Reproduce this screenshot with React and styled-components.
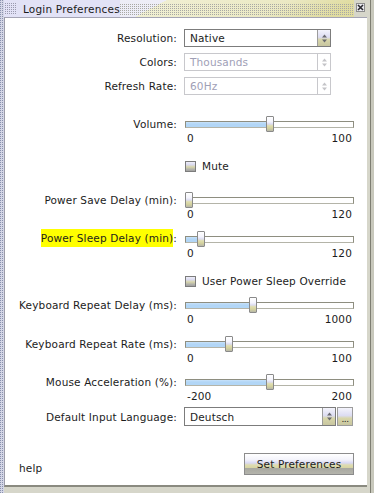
import React from "react";
import styled, { createGlobalStyle, css } from "styled-components";

const GlobalStyle = createGlobalStyle`
  html, body {
    margin: 0;
    padding: 0;
  }
  body {
    font-family: "DejaVu Sans", Verdana, sans-serif;
    font-size: 10.5px;
    letter-spacing: 0.15px;
    color: #1c1c1c;
  }
`;

const dots = (color) => `conic-gradient(at 1px 1px, transparent 75%, ${color} 75%)`;

const Desktop = styled.div`
  width: 374px;
  height: 493px;
  box-sizing: border-box;
  padding-left: 4px;
  display: flex;
  background: ${dots("#8a92ae")} 0 0 / 2px 2px, #d4d6e6;
`;

const Window = styled.div`
  flex: 1;
  display: flex;
  flex-direction: column;
  padding: 0 7px 6px 0;
  background: linear-gradient(
    to right,
    #d6d6ca calc(100% - 4px),
    #7e7e72 calc(100% - 4px),
    #7e7e72 calc(100% - 3px),
    #c8c8bc calc(100% - 3px)
  );
`;

const TitleBar = styled.div`
  height: 17px;
  display: flex;
  flex-shrink: 0;
`;

const Tab = styled.div`
  width: 116px;
  display: flex;
  align-items: center;
  background: #e2e2f6;
  padding-left: 1px;
  box-sizing: border-box;
`;

const Grip = styled.span`
  width: 12px;
  height: 11px;
  background: ${dots("#9a9aae")} 0 0 / 2px 2px;
`;

const TitleText = styled.span`
  margin-left: 6px;
  letter-spacing: 0.2px;
  white-space: nowrap;
`;

const TitleFill = styled.div`
  flex: 1;
  padding: 3px 0 2px;
  background: ${dots("#a8a8a4")} 0 0 / 2px 2px,
    linear-gradient(152deg, #ededf7 0, #ededf7 22px, #f0efd2 22px, #ebe9c4 80px, #e0dca0 112px);
  background-clip: content-box, border-box;
`;

const CloseBox = styled.div`
  width: 9px;
  height: 9px;
  margin: 3px 2px 0 2px;
  box-sizing: border-box;
  border: 1px solid #8c8c8c;
  background: #e8e8ee;
  display: flex;
  align-items: center;
  justify-content: center;
`;

const Body = styled.div`
  flex: 1;
  display: flex;
  flex-direction: column;
  background: #ffffff;
  border-top: 1px solid #a4a4b4;
  border-left: 1px solid #9c9ca8;
  border-bottom: 2px solid #8a8a80;
`;

const Row = styled.div`
  display: flex;
  align-items: center;
  height: ${(p) => p.$h || 16}px;
  margin-top: ${(p) => p.$mt || 0}px;
`;

const Label = styled.div`
  width: 172px;
  margin-right: 7px;
  flex-shrink: 0;
  text-align: right;
  white-space: nowrap;
`;

const Highlight = styled.span`
  display: inline-block;
  line-height: 18px;
  margin-top: -3px;
  background: #ffff00;
`;

const SelectBox = styled.div`
  display: flex;
  height: 100%;
  width: ${(p) => p.$w}px;
  box-sizing: border-box;
  border: 1px solid ${(p) => (p.$disabled ? "#c8c8cc" : "#7c7c7c")};
  background: #fff;
`;

const SelectValue = styled.div`
  flex: 1;
  display: flex;
  align-items: center;
  padding-left: 5px;
  color: ${(p) => (p.$disabled ? "#a0a0b6" : "#1c1c1c")};
`;

const Spinner = styled.div`
  width: 12px;
  display: flex;
  align-items: center;
  justify-content: center;
  border-left: 1px solid ${(p) => (p.$disabled ? "#c8c8cc" : "#9c9c9c")};
  ${(p) =>
    p.$disabled
      ? css`
          background: #ffffff;
        `
      : css`
          background: linear-gradient(to bottom, #f4f4fc 0%, #dcdcf2 45%, #d8d6aa 60%, #c8c6a0 100%);
        `}
`;

const MoreButton = styled.div`
  width: 16px;
  height: 100%;
  margin-left: 1px;
  box-sizing: border-box;
  border: 1px solid #9c9c9c;
  background: linear-gradient(to bottom, #f4f4fc 0%, #dcdcf2 45%, #d8d6aa 60%, #c8c6a0 100%);
  display: flex;
  align-items: flex-end;
  justify-content: center;
  font-size: 9px;
  line-height: 12px;
  letter-spacing: -0.5px;
`;

const SliderWrap = styled.div`
  position: relative;
  width: 169px;
  height: 16px;
  margin-left: 1px;
  display: flex;
  align-items: center;
`;

const Rail = styled.div`
  flex: 1;
  height: 7px;
  box-sizing: border-box;
  border: 1px solid #8e8e80;
  border-bottom-color: #b4b4a8;
  background: #ffffff;
  display: flex;
  overflow: hidden;
`;

const Fill = styled.div`
  height: 100%;
  background: linear-gradient(to bottom, #c8e2fa 0%, #b2d6f6 40%, #b2d6f6 100%);
`;

const Thumb = styled.div`
  position: absolute;
  top: 0;
  width: 8px;
  height: 16px;
  box-sizing: border-box;
  border: 1px solid #8a8a8a;
  border-radius: 1px;
  background: linear-gradient(to bottom, #ffffff 0%, #f4f4fc 35%, #dcdcf2 50%, #e0deb0 62%, #d4d29e 80%, #b8b8a8 100%);
`;

const Ticks = styled.div`
  width: 170px;
  box-sizing: border-box;
  padding: 0 2px 0 3px;
  display: flex;
  justify-content: space-between;
`;

const CheckBox = styled.span`
  width: 11px;
  height: 11px;
  margin-left: 1px;
  box-sizing: border-box;
  border: 1px solid #7c7c7c;
  background: linear-gradient(to bottom, #eeeef8 0%, #dadaf0 30%, #d8d6aa 55%, #b4b4ac 80%, #a0a0a0 100%);
`;

const CheckText = styled.span`
  margin-left: 6px;
  white-space: nowrap;
`;

const Footer = styled.div`
  display: flex;
  justify-content: space-between;
  align-items: flex-end;
  margin-top: 27px;
  padding: 0 13px 0 14px;
`;

const HelpLink = styled.span`
  padding-bottom: 1px;
`;

const PrefButton = styled.div`
  width: 110px;
  height: 22px;
  box-sizing: border-box;
  border: 1px solid #8c8c8c;
  background: linear-gradient(
    to bottom,
    #ffffff 0%,
    #f2f2fa 30%,
    #d8d8f4 45%,
    #dedcb0 55%,
    #d6d4a4 70%,
    #a8a8a0 72%,
    #b4b4ac 100%
  );
  display: flex;
  align-items: center;
  justify-content: center;
  white-space: nowrap;
`;

const SpinArrows = ({ disabled }) => {
  const c = disabled ? "#c4c4c8" : "#6a6a70";
  return (
    <svg width="7" height="11" viewBox="0 0 7 11">
      <path d="M3.5 1.5 L6 4.5 L1 4.5 Z" fill={c} />
      <path d="M1 6.5 L6 6.5 L3.5 9.5 Z" fill={c} />
    </svg>
  );
};

const Select = ({ value, width, disabled }) => (
  <SelectBox $w={width} $disabled={disabled}>
    <SelectValue $disabled={disabled}>{value}</SelectValue>
    <Spinner $disabled={disabled}>
      <SpinArrows disabled={disabled} />
    </Spinner>
  </SelectBox>
);

const Slider = ({ min, max, value }) => {
  const offset = Math.round(((value - min) / (max - min)) * 161);
  return (
    <SliderWrap>
      <Rail>
        <Fill style={{ width: offset + 3 }} />
      </Rail>
      <Thumb style={{ left: offset }} />
    </SliderWrap>
  );
};

const SliderField = ({ label, min, max, value, mt }) => (
  <>
    <Row $mt={mt}>
      <Label>{label}</Label>
      <Slider min={min} max={max} value={value} />
    </Row>
    <Row $h={12}>
      <Label />
      <Ticks>
        <span>{min}</span>
        <span>{max}</span>
      </Ticks>
    </Row>
  </>
);

const CheckField = ({ text, mt }) => (
  <Row $h={12} $mt={mt}>
    <Label />
    <CheckBox />
    <CheckText>{text}</CheckText>
  </Row>
);

export default function App() {
  return (
    <>
      <GlobalStyle />
      <Desktop>
        <Window>
          <TitleBar>
            <Tab>
              <Grip />
              <TitleText>Login Preferences</TitleText>
            </Tab>
            <TitleFill />
            <CloseBox>
              <svg width="7" height="7" viewBox="0 0 7 7">
                <path d="M1 1 L6 6 M6 1 L1 6" stroke="#2a2a30" strokeWidth="1.6" />
              </svg>
            </CloseBox>
          </TitleBar>
          <Body>
            <Row $h={18} $mt={11}>
              <Label>Resolution:</Label>
              <Select value="Native" width={147} />
            </Row>
            <Row $h={18} $mt={6}>
              <Label>Colors:</Label>
              <Select value="Thousands" width={147} disabled />
            </Row>
            <Row $h={18} $mt={6}>
              <Label>Refresh Rate:</Label>
              <Select value="60Hz" width={147} disabled />
            </Row>
            <SliderField label="Volume:" min={0} max={100} value={50} mt={21} />
            <CheckField text="Mute" mt={16} />
            <SliderField label="Power Save Delay (min):" min={0} max={120} value={0} mt={20} />
            <SliderField
              label={
                <>
                  <Highlight>Power Sleep Delay (min)</Highlight>:
                </>
              }
              min={0}
              max={120}
              value={9}
              mt={11}
            />
            <CheckField text="User Power Sleep Override" mt={16} />
            <SliderField label="Keyboard Repeat Delay (ms):" min={0} max={1000} value={400} mt={10} />
            <SliderField label="Keyboard Repeat Rate (ms):" min={0} max={100} value={25} mt={11} />
            <SliderField label="Mouse Acceleration (%):" min={-200} max={200} value={0} mt={10} />
            <Row $h={19} $mt={5}>
              <Label>Default Input Language:</Label>
              <Select value="Deutsch" width={152} />
              <MoreButton>...</MoreButton>
            </Row>
            <Footer>
              <HelpLink>help</HelpLink>
              <PrefButton>Set Preferences</PrefButton>
            </Footer>
          </Body>
        </Window>
      </Desktop>
    </>
  );
}
